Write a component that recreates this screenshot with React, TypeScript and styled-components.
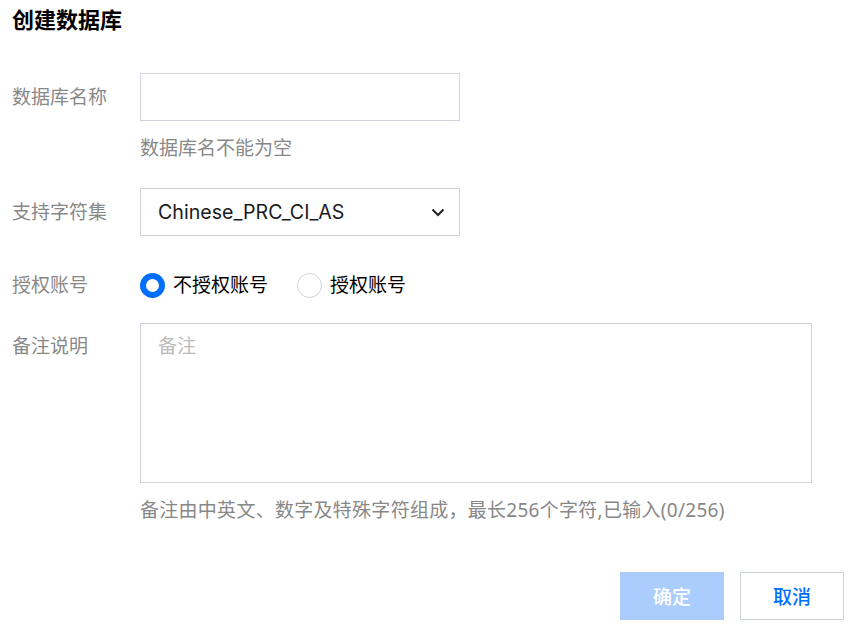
import React from "react";
import styled, { createGlobalStyle } from "styled-components";

const Global = createGlobalStyle`
  html, body { margin: 0; padding: 0; background: #fff; }
  body {
    font-family: "Noto Sans", "Noto Sans CJK SC", sans-serif;
    font-size: 19px;
    color: #000;
  }
  * { box-sizing: border-box; }
`;

const Page = styled.div`
  width: 866px;
  height: 626px;
  display: flex;
  flex-direction: column;
  padding: 4px 22px 0 12px;
`;

const Title = styled.h1`
  margin: 0;
  font-size: 22px;
  line-height: 30px;
  font-weight: 700;
  color: #000;
`;

const Form = styled.div`
  display: flex;
  flex-direction: column;
  margin-top: 39px;
`;

const Item = styled.div<{ $top?: number }>`
  display: grid;
  grid-template-columns: 128px 1fr;
  margin-top: ${(p) => p.$top ?? 0}px;
`;

const Label = styled.div<{ $lh?: number; $pt?: number }>`
  color: #888;
  font-size: 19px;
  line-height: ${(p) => p.$lh ?? 48}px;
  padding-top: ${(p) => p.$pt ?? 0}px;
`;

const Control = styled.div`
  display: flex;
  flex-direction: column;
`;

const TextInput = styled.input`
  width: 320px;
  height: 48px;
  border: 1px solid #cfd5de;
  outline: none;
  padding: 0 17px;
  font: inherit;
`;

const Hint = styled.div<{ $spacing?: number }>`
  margin-top: 15px;
  color: #888;
  font-size: 19px;
  line-height: 24px;
  white-space: nowrap;
  letter-spacing: ${(p) => p.$spacing ?? 0}px;
`;

const SelectBox = styled.div`
  width: 320px;
  height: 48px;
  border: 1px solid #cfd5de;
  display: flex;
  align-items: center;
  justify-content: space-between;
  padding: 0 14px 0 17px;
  color: #1a1a1a;
  font-family: "Inter", "Noto Sans", sans-serif;
  font-size: 19.6px;
`;

const RadioGroup = styled.div`
  display: flex;
  align-items: center;
  gap: 29px;
  height: 24px;
`;

const RadioItem = styled.label`
  display: flex;
  align-items: center;
  gap: 8px;
  line-height: 24px;
  color: #000;
  cursor: pointer;
`;

const Circle = styled.span<{ $checked?: boolean }>`
  width: 25px;
  height: 25px;
  border-radius: 50%;
  background: #fff;
  border: ${(p) => (p.$checked ? "6px solid #006eff" : "1px solid #cfd5de")};
`;

const TextArea = styled.div`
  width: 672px;
  height: 160px;
  border: 1px solid #cfd5de;
  padding: 10px 17px;
  line-height: 24px;
  color: #bbb;
`;

const Footer = styled.div`
  display: flex;
  justify-content: flex-end;
  gap: 16px;
  margin-top: 50px;
`;

const Button = styled.button<{ $primary?: boolean }>`
  width: 104px;
  height: 48px;
  font: inherit;
  font-size: 19px;
  font-weight: 500;
  border: 1px solid ${(p) => (p.$primary ? "#aacdfd" : "#cfd5de")};
  background: ${(p) => (p.$primary ? "#aacdfd" : "#fff")};
  color: ${(p) => (p.$primary ? "#fff" : "#006eff")};
  cursor: pointer;
`;

export default function App() {
  return (
    <>
      <Global />
      <Page>
        <Title>创建数据库</Title>
        <Form>
          <Item>
            <Label>数据库名称</Label>
            <Control>
              <TextInput />
              <Hint>数据库名不能为空</Hint>
            </Control>
          </Item>
          <Item $top={28}>
            <Label>支持字符集</Label>
            <Control>
              <SelectBox>
                <span>Chinese_PRC_CI_AS</span>
                <svg width="14" height="9" viewBox="0 0 14 9">
                  <polyline
                    points="1.5,1.5 7,7 12.5,1.5"
                    fill="none"
                    stroke="#222"
                    strokeWidth="2"
                  />
                </svg>
              </SelectBox>
            </Control>
          </Item>
          <Item $top={37}>
            <Label $lh={24}>授权账号</Label>
            <RadioGroup>
              <RadioItem>
                <Circle $checked />
                不授权账号
              </RadioItem>
              <RadioItem>
                <Circle />
                授权账号
              </RadioItem>
            </RadioGroup>
          </Item>
          <Item $top={26}>
            <Label $lh={24} $pt={11}>备注说明</Label>
            <Control>
              <TextArea>备注</TextArea>
              <Hint $spacing={0.28}>备注由中英文、数字及特殊字符组成，最长256个字符,已输入(0/256)</Hint>
            </Control>
          </Item>
        </Form>
        <Footer>
          <Button $primary>确定</Button>
          <Button>取消</Button>
        </Footer>
      </Page>
    </>
  );
}
